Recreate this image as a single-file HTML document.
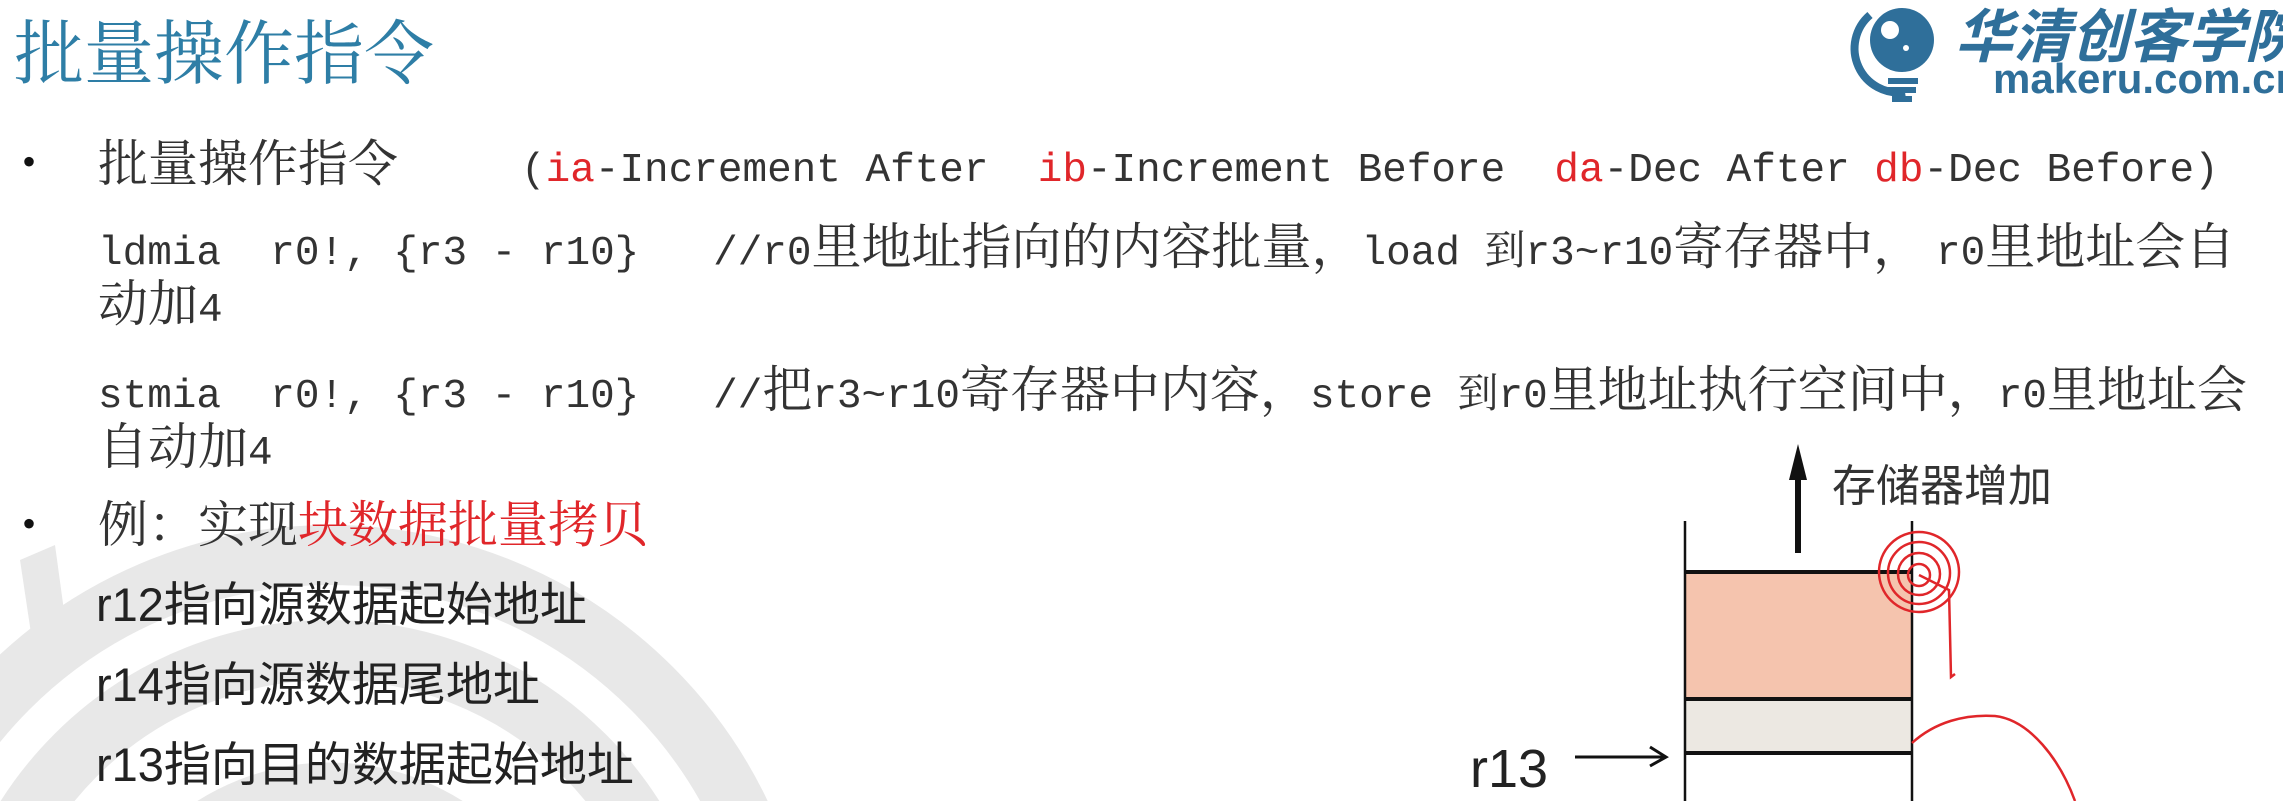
<!DOCTYPE html>
<html><head><meta charset="utf-8"><style>
body{margin:0;width:2283px;height:801px;overflow:hidden;background:#fff;position:relative;font-family:"Liberation Serif","Noto Serif CJK SC",serif;}
.a{position:absolute;white-space:pre;}
.m{font-family:"Liberation Mono","Noto Serif CJK SC",monospace;font-size:41px;color:#333;}
.c{font-family:"Noto Serif CJK SC",serif;font-size:50px;color:#333;}
.s{font-family:"Liberation Sans","Noto Sans CJK SC",sans-serif;font-size:47px;color:#222;}
.r{color:#e0262a;}
.b{font-size:40px;color:#111;}
</style></head><body>
<svg class="a" style="left:0;top:0" width="2283" height="801">
<g fill="none" stroke="#e8e8e8">
<circle cx="330" cy="1010" r="455" stroke-width="60"/>
<circle cx="330" cy="1010" r="360" stroke-width="60"/>
<circle cx="330" cy="1010" r="220" stroke-width="55"/>
</g>
<polygon points="20,560 55,545 68,640 35,660" fill="#e8e8e8"/>
<!-- logo -->
<g fill="#2f6f9a">
<circle cx="1902" cy="40" r="32"/>
<circle cx="1890" cy="30" r="9" fill="#fff"/>
<circle cx="1906" cy="48" r="3" fill="#fff"/>
<path d="M1870,15 A44,44 0 0 0 1905,92" stroke="#2f6f9a" stroke-width="8" fill="none"/>
<rect x="1888" y="78" width="30" height="6"/><rect x="1888" y="87" width="28" height="6"/><rect x="1892" y="96" width="20" height="6"/>
</g>
<!-- diagram -->
<rect x="1685" y="572" width="227" height="127" fill="#f5c4ae"/>
<rect x="1685" y="699" width="227" height="54" fill="#ece8e2"/>
<g stroke="#111">
<line x1="1685" y1="521" x2="1685" y2="801" stroke-width="2.5"/>
<line x1="1912" y1="521" x2="1912" y2="801" stroke-width="2.5"/>
<line x1="1685" y1="572" x2="1912" y2="572" stroke-width="4"/>
<line x1="1685" y1="699" x2="1912" y2="699" stroke-width="4"/>
<line x1="1685" y1="753" x2="1912" y2="753" stroke-width="4"/>
<line x1="1798" y1="553" x2="1798" y2="470" stroke-width="6"/>
<line x1="1575" y1="757" x2="1664" y2="757" stroke-width="3"/>
</g>
<polygon points="1798,444 1789,480 1807,480" fill="#111"/>
<polyline points="1650,747 1666,757 1650,766" fill="none" stroke="#111" stroke-width="3"/>
<g fill="none" stroke="#e0262a" stroke-width="2.5">
<circle cx="1919" cy="575" r="11"/><circle cx="1919" cy="574" r="21"/><circle cx="1919" cy="573" r="31"/><circle cx="1919" cy="572" r="40"/>
<path d="M1919,575 L1949,590 L1951,677 L1955,674"/>
<path d="M1912,743 C1935,722 1965,714 1995,716 C2030,720 2060,760 2075,801"/>
</g>
</svg>
<div class="a" style="left:14px;top:-2px;font-family:'Noto Serif CJK SC',serif;font-size:70px;color:#2e7ea6;">批量操作指令</div>
<div class="a" style="left:1955px;top:-10px;font-family:'Liberation Sans','Noto Sans CJK SC',sans-serif;font-weight:bold;font-style:italic;font-size:58px;color:#2f6f9a;">华清创客学院</div>
<div class="a" style="left:1993px;top:55px;font-family:'Liberation Sans',sans-serif;font-weight:bold;font-size:42px;color:#2f6f9a;">makeru.com.cn</div>

<div class="a b" style="left:22px;top:138px;">•</div>
<div class="a c" style="left:98px;top:124px;">批量操作指令<span class="m">     (<span class="r">ia</span>-Increment After  <span class="r">ib</span>-Increment Before  <span class="r">da</span>-Dec After <span class="r">db</span>-Dec Before)</span></div>

<div class="a c" style="left:98px;top:207px;"><span class="m">ldmia  r0!, {r3 - r10}   //r0</span>里地址指向的内容批量，<span class="m">load 到r3~r10</span>寄存器中， <span class="m">r0</span>里地址会自</div>
<div class="a c" style="left:98px;top:264px;">动加<span class="m">4</span></div>
<div class="a c" style="left:98px;top:350px;"><span class="m">stmia  r0!, {r3 - r10}   //</span>把<span class="m">r3~r10</span>寄存器中内容，<span class="m">store 到r0</span>里地址执行空间中，<span class="m">r0</span>里地址会</div>
<div class="a c" style="left:98px;top:407px;">自动加<span class="m">4</span></div>

<div class="a b" style="left:22px;top:500px;">•</div>
<div class="a c" style="left:98px;top:485px;">例：实现<span class="r">块数据批量拷贝</span></div>
<div class="a s" style="left:96px;top:566px;">r12指向源数据起始地址</div>
<div class="a s" style="left:96px;top:646px;">r14指向源数据尾地址</div>
<div class="a s" style="left:96px;top:726px;">r13指向目的数据起始地址</div>

<div class="a" style="left:1832px;top:450px;font-family:'Liberation Sans','Noto Sans CJK SC',sans-serif;font-size:44px;color:#333;">存储器增加</div>
<div class="a" style="left:1470px;top:738px;font-family:'Liberation Sans',sans-serif;font-size:54px;color:#222;">r13</div>
</body></html>
